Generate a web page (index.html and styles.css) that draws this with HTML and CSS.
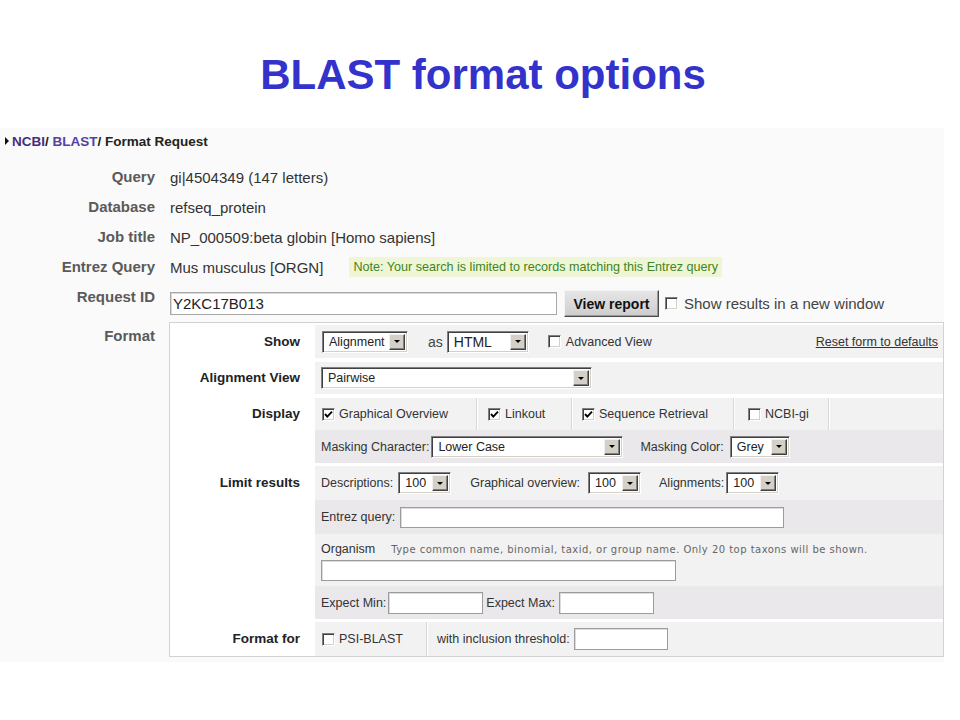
FILE: index.html
```html
<!DOCTYPE html>
<html>
<head>
<meta charset="utf-8">
<title>BLAST format options</title>
<link rel="stylesheet" href="styles.css">
</head>
<body>
<h1 class="title">BLAST format options</h1>
<div class="shot">
  <div class="crumb"><span class="tri"></span><span class="c-ncbi">NCBI</span><span class="c-sl">/&nbsp;</span><span class="c-blast">BLAST</span><span class="c-sl">/&nbsp;Format Request</span></div>
  <div class="info">
    <div class="lab">Query</div><div class="val">gi|4504349 (147 letters)</div>
    <div class="lab">Database</div><div class="val">refseq_protein</div>
    <div class="lab">Job title</div><div class="val">NP_000509:beta globin [Homo sapiens]</div>
    <div class="lab">Entrez Query</div><div class="val">Mus musculus [ORGN]<span class="note">Note: Your search is limited to records matching this Entrez query</span></div>
    <div class="lab lab-rid">Request ID</div>
    <div class="val val-rid"><span class="rid-in">Y2KC17B013</span><span class="btn">View report</span><span class="cb cb-new"></span><span class="newwin">Show results in a new window</span></div>
    <div class="lab lab-fmt">Format</div>
    <div class="fbox">
      <div class="grp">
        <div class="glab gl-33">Show</div>
        <div class="gcont">
          <div class="row r-show h33">
            <span class="sel s-align"><span>Alignment</span><span class="dd"></span></span>
            <span class="as">as</span>
            <span class="sel s-html"><span class="big">HTML</span><span class="dd"></span></span>
            <span class="cb cb-adv"></span><span class="adv">Advanced View</span>
            <span class="reset">Reset form to defaults</span>
          </div>
        </div>
      </div>
      <div class="grp">
        <div class="glab gl-32">Alignment View</div>
        <div class="gcont">
          <div class="row h32">
            <span class="sel s-pair"><span>Pairwise</span><span class="dd"></span></span>
          </div>
        </div>
      </div>
      <div class="grp">
        <div class="glab gl-32">Display</div>
        <div class="gcont">
          <div class="row row-cells h32">
            <div class="cell c-go"><span class="cb"><svg viewBox="0 0 9 9" width="9" height="9"><polyline points="1,4 3.3,6.6 8,1.6" fill="none" stroke="#000" stroke-width="1.9"/></svg></span>Graphical Overview</div>
            <div class="cell c-lo"><span class="cb"><svg viewBox="0 0 9 9" width="9" height="9"><polyline points="1,4 3.3,6.6 8,1.6" fill="none" stroke="#000" stroke-width="1.9"/></svg></span>Linkout</div>
            <div class="cell c-sr"><span class="cb"><svg viewBox="0 0 9 9" width="9" height="9"><polyline points="1,4 3.3,6.6 8,1.6" fill="none" stroke="#000" stroke-width="1.9"/></svg></span>Sequence Retrieval</div>
            <div class="cell c-gi"><span class="cb"></span>NCBI-gi</div>
            <div class="cell c-end"></div>
          </div>
          <div class="row alt h33">
            <span>Masking Character:</span>
            <span class="sel s-mask"><span>Lower Case</span><span class="dd"></span></span>
            <span class="ml17">Masking Color:</span>
            <span class="sel s-grey"><span>Grey</span><span class="dd"></span></span>
          </div>
        </div>
      </div>
      <div class="grp g-gap3">
        <div class="glab gl-34">Limit results</div>
        <div class="gcont">
          <div class="row h34">
            <span>Descriptions:</span>
            <span class="sel s-100"><span>100</span><span class="dd"></span></span>
            <span class="ml19">Graphical overview:</span>
            <span class="sel s-100 s-go"><span>100</span><span class="dd"></span></span>
            <span class="ml18">Alignments:</span>
            <span class="sel s-100 s-al"><span>100</span><span class="dd"></span></span>
          </div>
          <div class="row alt h34">
            <span>Entrez query:</span>
            <span class="inp i-entrez"></span>
          </div>
          <div class="row row-org h52">
            <div class="orgline"><span>Organism</span><span class="hint">Type common name, binomial, taxid, or group name. Only 20 top taxons will be shown.</span></div>
            <span class="inp i-org"></span>
          </div>
          <div class="row alt h33">
            <span>Expect Min:</span>
            <span class="inp i-exp i-min"></span>
            <span class="ml3">Expect Max:</span>
            <span class="inp i-exp"></span>
          </div>
        </div>
      </div>
      <div class="grp g-gap3">
        <div class="glab gl-34">Format for</div>
        <div class="gcont">
          <div class="row row-cells h34">
            <div class="cell c-psi"><span class="cb"></span>PSI-BLAST</div>
            <div class="cell c-thr">with inclusion threshold:<span class="inp i-thr"></span></div>
          </div>
        </div>
      </div>
    </div>
  </div>
</div>
</body>
</html>
```
FILE: styles.css
```css
* { box-sizing: border-box; }
body {
  margin: 0;
  background: #fff;
  font-family: "Liberation Sans", Arial, sans-serif;
  color: #333;
}
.title {
  margin: 0;
  padding: 51px 0 0 6px;
  font-size: 42px;
  line-height: 48px;
  font-weight: bold;
  text-align: center;
  color: #3333cc;
}
.shot {
  margin-top: 29px;
  width: 944px;
  background: #fafafa;
  padding: 4px 0 5px;
}
.crumb {
  display: flex;
  align-items: center;
  height: 18px;
  font-size: 13.5px;
  font-weight: bold;
  color: #222;
  white-space: nowrap;
}
.tri {
  width: 0; height: 0;
  margin: 0 3px 0 5px;
  border-left: 4px solid #111;
  border-top: 4px solid transparent;
  border-bottom: 4px solid transparent;
}
.c-ncbi { color: #4a2a7e; }
.c-blast { color: #5342a4; }
.c-sl { color: #222; }

.info {
  display: grid;
  grid-template-columns: 155px 1fr;
  grid-template-rows: 30px 30px 30px 30px 40px auto;
  column-gap: 15px;
  margin-top: 12px;
}
.lab {
  text-align: right;
  font-weight: bold;
  font-size: 15px;
  line-height: 30px;
  color: #5a5a5a;
}
.val {
  display: flex;
  align-items: center;
  font-size: 15px;
  color: #333;
  white-space: nowrap;
}
.note {
  margin-left: 26px;
  padding: 3px 4px;
  font-size: 12.6px;
  line-height: 14px;
  background: #eff6d6;
  color: #3f8424;
}
.lab-rid { line-height: 16px; padding-top: 7px; }
.val-rid { padding-top: 3px; }
.rid-in {
  width: 387px; height: 23px;
  background: #fff;
  border: 1px solid #a8a8a8;
  box-shadow: inset 1px 1px 0 #d8d8d8;
  padding-left: 2px;
  font-size: 15px;
  line-height: 21px;
  color: #222;
}
.btn {
  margin-left: 7px;
  width: 95px; height: 27px;
  display: flex; align-items: center; justify-content: center;
  background: linear-gradient(#e6e6e6, #cdcdcd);
  border: 1px solid;
  border-color: #f4f4f4 #4a4a4a #4a4a4a #f4f4f4;
  box-shadow: inset -1px -1px 0 #9a9a9a;
  font-weight: bold;
  font-size: 14px;
  color: #111;
}
.cb-new { margin-left: 6px; }
.newwin { margin-left: 6px; color: #444; }
.lab-fmt { line-height: 16px; padding-top: 6px; }

.cb {
  flex: none;
  width: 13px; height: 13px;
  display: inline-flex; align-items: center; justify-content: center;
  background: #fff;
  border: 1px solid;
  border-color: #808080 #fff #fff #808080;
  box-shadow: inset 1px 1px 0 #404040, inset -1px -1px 0 #d4d0c8;
}
.cb svg { display: block; }

.fbox {
  margin-left: -1px;
  background: #fff;
  border: 1px solid #d2d2d2;
  padding-top: 2px;
  display: flex;
  flex-direction: column;
}
.grp { display: flex; margin-top: 4px; }
.grp:first-child { margin-top: 0; }
.grp.g-gap3 { margin-top: 3px; }
.glab {
  flex: none;
  width: 145px;
  padding-right: 15px;
  text-align: right;
  font-weight: bold;
  font-size: 13.5px;
  color: #222;
}
.gl-32 { line-height: 32px; }
.gl-33 { line-height: 33px; }
.gl-34 { line-height: 34px; }
.gcont { flex: 1; display: flex; flex-direction: column; }
.row {
  display: flex;
  align-items: center;
  padding-left: 6px;
  background: #f2f2f2;
  font-size: 12.5px;
  color: #333;
  white-space: nowrap;
}
.row.alt { background: #ebe8eb; }
.h32 { height: 32px; }
.h33 { height: 33px; }
.h34 { height: 34px; }
.h52 { height: 52px; }

.sel {
  display: inline-flex;
  align-items: center;
  justify-content: space-between;
  flex: none;
  height: 22px;
  margin-left: 5px;
  padding: 0 2px 0 6px;
  background: #fff;
  border: 1px solid;
  border-color: #808080 #fff #fff #808080;
  box-shadow: inset 1px 1px 0 #404040, inset -1px -1px 0 #d4d0c8;
  font-size: 12.5px;
  color: #222;
}
.sel .big { font-size: 14px; }
.dd {
  width: 16px; height: 16px;
  display: flex; align-items: center; justify-content: center;
  background: #d4d0c8;
  border: 1px solid;
  border-color: #f0f0f0 #404040 #404040 #f0f0f0;
  box-shadow: inset -1px -1px 0 #808080;
}
.dd::after {
  content: "";
  width: 0; height: 0;
  border-left: 3px solid transparent;
  border-right: 3px solid transparent;
  border-top: 3px solid #000;
}
.r-show { padding-left: 7px; }
.r-show .s-align { margin-left: 0; width: 86px; }
.as { margin-left: 20px; font-size: 14px; color: #444; }
.s-html { width: 82px; margin-left: 4px; }
.cb-adv { margin-left: 19px; }
.adv { margin-left: 5px; }
.reset { margin-left: auto; margin-right: 5px; text-decoration: underline; color: #333; }
.s-pair { margin-left: 0; width: 271px; }
.s-mask { width: 192px; margin-left: 2px; }
.s-grey { width: 60px; margin-left: 6px; }
.s-100 { width: 53px; }
.s-go { margin-left: 8px; }
.s-al { margin-left: 2px; }
.ml17 { margin-left: 17px; }
.ml18 { margin-left: 18px; }
.ml19 { margin-left: 19px; }
.ml3 { margin-left: 3px; }

.row-cells { padding-left: 0; }
.cell {
  height: 100%;
  display: flex;
  align-items: center;
  gap: 4px;
  border-right: 1px solid #d8d8d8;
  box-shadow: 1px 0 0 #fff;
}
.c-go { width: 162px; padding-left: 7px; }
.c-lo { width: 95px; padding-left: 11px; }
.c-sr { width: 162px; padding-left: 10px; }
.c-gi { width: 95px; padding-left: 14px; }
.c-end { flex: 1; border-right: none; box-shadow: none; }
.c-psi { width: 112px; padding-left: 7px; }
.c-thr { flex: 1; padding-left: 10px; gap: 0; border-right: none; box-shadow: none; }

.inp {
  flex: none;
  height: 22px;
  margin-left: 4px;
  background: #fff;
  border: 1px solid #9c9c9c;
  box-shadow: inset 1px 1px 0 #dcdcdc;
}
.i-entrez { width: 384px; height: 21px; margin-left: 5px; }
.i-exp { width: 95px; }
.i-min { margin-left: 2px; }
.i-thr { width: 94px; }
.row-org {
  flex-direction: column;
  align-items: flex-start;
  padding-top: 8px;
}
.orgline { display: flex; align-items: center; height: 14px; }
.hint {
  margin-left: 16px;
  font-family: "DejaVu Sans", Verdana, sans-serif;
  font-size: 10px;
  letter-spacing: 0.47px;
  color: #666;
}
.i-org { width: 355px; height: 21px; margin-left: 0; margin-top: 4px; }
```
